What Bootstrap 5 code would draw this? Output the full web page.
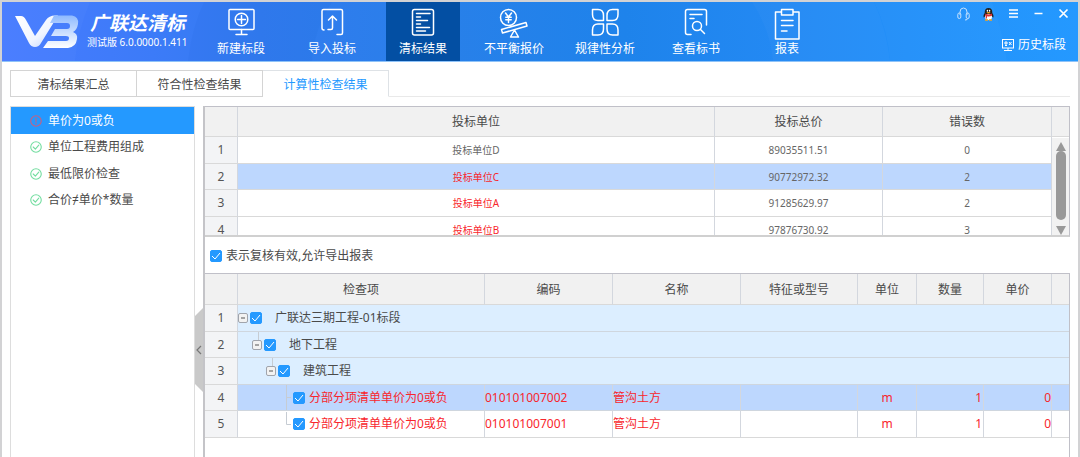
<!DOCTYPE html>
<html lang="zh-CN">
<head>
<meta charset="utf-8">
<meta name="viewport" content="width=device-width, initial-scale=1">
<title>广联达清标</title>
<link href="https://cdn.jsdelivr.net/npm/bootstrap@5.3.0/dist/css/bootstrap.min.css" rel="stylesheet">
<style>
body{font-family:"Noto Sans","Noto Sans CJK SC",sans-serif;font-size:12px;line-height:18px;color:#4a4a4a;background:#fff}
.app-window{border:2px solid #d2d2d4;border-bottom:0}
svg{display:block}
.stroke-icon{fill:none;stroke:currentColor;stroke-width:1.5;stroke-linecap:round;stroke-linejoin:round}

/* header */
.app-header{min-height:60px;color:#fff;border-bottom:1px solid #8fc3f8;position:relative;
  background:linear-gradient(90deg,#477bff 0,#3c7bf8 14%,#327bef 24%,#2880e9 42%,#1e83eb 58%,#2389f3 72%,#2391fa 86%,#2499ff 100%)}
.header-waves{position:absolute;inset:0;width:100%;height:100%}
.brand-box{width:202px;padding-left:13px}
.brand-name{font-size:19px;line-height:26px;font-weight:700;font-style:italic;padding-left:3px}
.brand-version{font-size:10px;line-height:12px}
.tool-bar{gap:17px}
.tool-btn{width:74px;padding:6px 0 0;border:0;background:none;color:#fff;font-size:12px;line-height:22px;white-space:nowrap}
.tool-btn.active{background:#034fa3}
.win-btn{width:13px;height:14px;padding:0;border:0;background:none;color:#fff}
.win-btns{gap:12px}
.header-side{padding:5px 8px 0 0}
.history-link{margin-top:15px;padding-right:4px;gap:4px}

/* tabs */
.tab-strip{margin:8px 8px 0;border-bottom:1px solid #e9e9e9;flex-wrap:nowrap}
.tab-strip .nav-link{width:127px;height:27px;margin:0 0 -1px;padding:5px 0 3px;border:1px solid #d4d4d4;border-radius:0;color:#4a4a4a;text-align:center;line-height:18px}
.tab-strip .nav-item + .nav-item .nav-link{width:126px;border-left:0}
.tab-strip .nav-link.active{color:#2499ff;border-bottom-color:#fff}

/* check list on the left */
.work-area{margin:9px 8px 0}
.check-nav{width:185px;border:1px solid #ddd;border-bottom:0}
.check-nav a{height:26px;padding-left:19px;gap:6px;color:#4a4a4a;text-decoration:none}
.check-nav a:nth-child(odd){height:27px}
.check-nav a.active{background:#2499ff;color:#fff}
.ok-icon{color:#73dda0;stroke-width:1.2}
.warn-icon{color:#c95f80;stroke-width:1.2}
.splitter{width:8px}
.splitter-handle{width:8px;height:84px;margin-top:202px;padding:0;border:0;background:#c9c9c9;color:#777;clip-path:polygon(0 8px,100% 0,100% 100%,0 76px)}

/* grids */
.result-pane{border-left:2px solid #c4c4c8;min-width:0}
.bid-box{height:131px;overflow:hidden;position:relative;border:1px solid #c0c0c8;border-left:0;border-bottom:2px solid #d0d0d0}
.item-box{border:1px solid #c0c0c8;border-left:0;border-bottom:0}
.grid-table{width:100%;table-layout:fixed;border-collapse:separate;border-spacing:0;margin:0}
.grid-table th,.grid-table td{padding:0;font-weight:400;border-right:1px solid #d3d7de;border-bottom:1px solid #d9d9d9;text-align:center;white-space:nowrap;line-height:18px;overflow:hidden}
.grid-table tr > :last-child{border-right:0}
.grid-table thead th{height:30px;background:#f1f1f1;color:#4a4a4a;padding-top:1px}
.item-table thead th{height:31px}
.grid-table tbody tr{height:27px}
.grid-table tbody tr:nth-child(even){height:26px}
.grid-table tbody th{background:#f3f4f6;color:#555}
.bid-table tbody td{font-size:10px;color:#666}
.red-text,.bid-table tbody td.red-text{color:#f8262c}
.picked-row td{background:#bdd7fe}
.group-row td{background:#dceeff}
.item-table .picked-row td,.item-table .group-row td{border-bottom-color:#cfd6de}
.col-no{width:33px}.col-wide{width:168px}.col-err{width:169px}.col-end{width:17px}
.col-code{width:128px}.col-spec{width:117px}.col-unit{width:59px}.col-qty{width:67px}.col-price{width:68px}

.scroll-track{position:absolute;top:31px;right:0;bottom:0;width:17px;background:#f2f2f2;padding:4px 0 0}
.scroll-thumb{width:10px;height:69px;border-radius:5px;background:#999}
.blue-check.form-check-input{width:12px;height:12px;margin:0;border-radius:2px;float:none;flex:none}
.blue-check.form-check-input:checked{background-color:#2499ff;border-color:#2499ff;background-size:100% 100%;
  background-image:url("data:image/svg+xml,%3csvg xmlns='http://www.w3.org/2000/svg' viewBox='0 0 10 10'%3e%3cpath fill='none' stroke='%23fff' stroke-width='1' d='M1 5l3 3 5-6'/%3e%3c/svg%3e")}
.review-row{height:36px;padding:2px 0 0 5px;gap:4px}

/* tree column */
.tree-cell{height:25px;gap:2px}
.level-1{padding-left:14px}.level-2{padding-left:28px}.level-3{padding-left:42px}
.tree-toggle{width:10px;height:10px;padding:0;border:1px solid #a0a4ac;border-radius:2px;background:#f2f2f2;color:#555;position:relative}
.level-1 .tree-toggle::before,.level-2 .tree-toggle::before{content:"";position:absolute;left:5px;bottom:9px;height:8px;border-left:1px solid #c6ccd3}
.tree-cell label{margin-left:11px}
.level-3 label{margin-left:2px}
.leaf-line{width:11px;height:25px;color:#c6ccd3}
.num-cell{padding-right:1px!important}
</style>
</head>
<body>
<div class="app-window min-vh-100 d-flex flex-column">

<header class="app-header d-flex">
  <svg class="header-waves" viewBox="0 0 1076 60" preserveAspectRatio="none" aria-hidden="true">
    <path d="M0 0H88Q76 28 73 60H0Z" fill="#fff" opacity=".025"/>
    <path d="M202 0Q190 25 186 60H310Q312 28 330 0Z" fill="#0058c8" opacity=".05"/>
    <path d="M750 0Q768 28 771 60H888Q884 26 872 0Z" fill="#fff" opacity=".025"/>
    <path d="M872 0Q886 28 888 60H1005Q1000 28 990 0Z" fill="#fff" opacity=".02"/>
  </svg>
  <div class="brand-box d-flex position-relative">
    <svg width="64" height="48" viewBox="0 0 64 48" aria-hidden="true">
      <defs>
        <linearGradient id="vFill" x1="0" y1="0" x2="1" y2="1"><stop offset="0" stop-color="#fff"/><stop offset=".6" stop-color="#f0f5ff"/><stop offset="1" stop-color="#b7cfff"/></linearGradient>
        <linearGradient id="bFill" x1="0" y1="0" x2="0" y2="1"><stop offset="0" stop-color="#8ebaff"/><stop offset="1" stop-color="#fff"/></linearGradient>
      </defs>
      <path d="M0 14H6Q9 14 11 18L20 34L31 18Q34 13.500 40 13.500H43L26 41Q24 45 20 45Q16 45 14 41Z" fill="url(#vFill)"/>
      <path d="M39 13.500H57Q64 14.500 63 22Q62 28 58 30Q63 32 62 37Q61 45 53 46H28L33 39H51Q54 39 54 36Q54 34 51 34H36L40 27H52Q55 27 55 24Q55 21 52 21H35Z" fill="url(#bFill)"/>
    </svg>
    <div class="text-nowrap pt-2 ps-2">
      <div class="brand-name">广联达清标</div>
      <div class="brand-version">测试版 6.0.0000.1.411</div>
    </div>
  </div>
  <nav class="tool-bar d-flex position-relative" aria-label="功能">
    <button type="button" class="tool-btn d-flex flex-column align-items-center">
      <svg class="stroke-icon" width="30" height="30" viewBox="0 0 30 30"><rect x="3" y="1.500" width="25" height="20" rx="1"/><circle cx="15.500" cy="11.500" r="6.300"/><path d="M15.500 7.500v8M11.500 11.500h8M15.500 21.500v5M10 26.500h11"/></svg>
      新建标段
    </button>
    <button type="button" class="tool-btn d-flex flex-column align-items-center">
      <svg class="stroke-icon" width="30" height="30" viewBox="0 0 30 30"><path d="M7 22Q5 22 5 20V3Q5 1.500 6.500 1.500H24Q25.500 1.500 25.500 3V25Q25.500 26.500 24 26.500H20"/><path d="M11 21.500H14Q15.500 21.500 15.500 20V8M11.500 12L15.500 8L19.500 12"/></svg>
      导入投标
    </button>
    <button type="button" class="tool-btn active d-flex flex-column align-items-center" aria-current="page">
      <svg class="stroke-icon" width="30" height="30" viewBox="0 0 30 30"><rect x="4.500" y="1.500" width="21" height="25.500" rx="2"/><path d="M8.500 5.500h13.500M8.500 9h4M8.500 12.500h11M8.500 16h4M8.500 19.500h13M8.500 23h9"/></svg>
      清标结果
    </button>
    <button type="button" class="tool-btn d-flex flex-column align-items-center">
      <svg class="stroke-icon" width="30" height="30" viewBox="0 0 30 30"><circle cx="9.500" cy="9.500" r="8"/><path d="M6.500 5L9.500 9L12.500 5M9.500 9V14.500M6.800 9.200H12.200M6.800 11.800H12.200"/><path d="M2.500 21.500L27 14.500L28 18L3.500 25Z"/><path d="M15.500 22L19.500 29H11.500Z"/></svg>
      不平衡报价
    </button>
    <button type="button" class="tool-btn d-flex flex-column align-items-center">
      <svg class="stroke-icon" width="30" height="30" viewBox="0 0 30 30"><path d="M2.500 1.500H8Q13.500 1.500 13.500 7.500V12.500H8Q2.500 12.500 2.500 6.500ZM28 1.500H22.500Q17 1.500 17 7.500V12.500H22.500Q28 12.500 28 6.500ZM2.500 27H8Q13.500 27 13.500 21V16H8Q2.500 16 2.500 22ZM28 27H22.500Q17 27 17 21V16H22.500Q28 16 28 22Z"/></svg>
      规律性分析
    </button>
    <button type="button" class="tool-btn d-flex flex-column align-items-center">
      <svg class="stroke-icon" width="30" height="30" viewBox="0 0 30 30"><path d="M10 26.500H6.500Q4.500 26.500 4.500 24.500V3.500Q4.500 1.500 6.500 1.500H23.500Q25.500 1.500 25.500 3.500V17M9 6.500H21M9 10.500H13"/><circle cx="16" cy="18" r="4.500"/><path d="M19.500 21.500L23.500 25.500"/></svg>
      查看标书
    </button>
    <button type="button" class="tool-btn d-flex flex-column align-items-center">
      <svg class="stroke-icon overflow-visible" width="30" height="30" viewBox="0 0 30 30"><path d="M9.500 4H3.500V31H27V4H21M9.500 1.500H21V7H9.500ZM9.500 12.500H21M9.500 17.500H21M9.500 23H15"/></svg>
      报表
    </button>
  </nav>
  <div class="header-side ms-auto position-relative d-flex flex-column align-items-end">
    <div class="d-flex win-btns">
      <button type="button" class="win-btn" aria-label="客服"><svg width="13" height="14" viewBox="0 0 13 14" fill="none" stroke="#c5e2ff" stroke-width="1"><path d="M3 8V5Q3 1 6.500 1T10 5V8"/><rect x=".8" y="6" width="3" height="5.500" rx="1.500"/><rect x="9.200" y="6" width="3" height="5.500" rx="1.500"/><path d="M11 11.500Q10.500 13 8 13"/></svg></button>
      <button type="button" class="win-btn" aria-label="在线咨询"><svg width="13" height="14" viewBox="0 0 13 14"><path d="M2.700 6Q2.500 1 6.500 1T10.300 6Q12 8 11.500 10.500L10 9.500H3L1.500 10.500Q1 8 2.700 6Z" fill="#222"/><ellipse cx="6.500" cy="10" rx="3.500" ry="3" fill="#fff"/><path d="M3 6.500Q6.500 8.500 10 6.500V8.500Q8 10 5 9.300V11.500H3.700V9Z" fill="#e02f2f"/><ellipse cx="5.400" cy="3.800" rx=".7" ry="1" fill="#fff"/><ellipse cx="7.600" cy="3.800" rx=".7" ry="1" fill="#fff"/><ellipse cx="6.500" cy="5.700" rx="2" ry=".7" fill="#f6a51c"/><path d="M3 13H6M7 13H10" stroke="#f6a51c" stroke-width="1.500"/></svg></button>
      <button type="button" class="win-btn" aria-label="菜单"><svg width="13" height="14" viewBox="0 0 13 14" stroke="#fff" stroke-width="1.500"><path d="M2 3h9M2 6.500h9M2 10h9"/></svg></button>
      <button type="button" class="win-btn" aria-label="最小化"><svg width="13" height="14" viewBox="0 0 13 14" stroke="#fff" stroke-width="1.500"><path d="M2.500 6.500h8"/></svg></button>
      <button type="button" class="win-btn" aria-label="关闭"><svg width="13" height="14" viewBox="0 0 13 14" stroke="#fff" stroke-width="1.700"><path d="M2.500 2.500L10.500 10.500M10.500 2.500L2.500 10.500"/></svg></button>
    </div>
    <a href="#" class="history-link d-flex align-items-center text-white text-decoration-none">
      <svg width="12" height="12" viewBox="0 0 12 12" fill="none" stroke="#fff" stroke-width="1"><rect x=".5" y=".5" width="11" height="8.500"/><path d="M2 11.500H10M6 9V11.500M3 6.500H5M3 3H5V5H3ZM7 3L9.500 6M9.500 3L7 6"/></svg>
      历史标段
    </a>
  </div>
</header>

<ul class="tab-strip nav nav-tabs">
  <li class="nav-item"><a class="nav-link" href="#">清标结果汇总</a></li>
  <li class="nav-item"><a class="nav-link" href="#">符合性检查结果</a></li>
  <li class="nav-item"><a class="nav-link active" aria-current="page" href="#">计算性检查结果</a></li>
</ul>

<main class="work-area d-flex flex-grow-1">
  <nav class="check-nav flex-shrink-0" aria-label="检查项目">
    <a href="#" class="active d-flex align-items-center"><svg class="stroke-icon warn-icon" width="12" height="12" viewBox="0 0 13 13"><circle cx="6.500" cy="6.500" r="5.700"/><path d="M6.500 3.500V7.500M6.500 9V9.500"/></svg>单价为0或负</a>
    <a href="#" class="d-flex align-items-center"><svg class="stroke-icon ok-icon" width="12" height="12" viewBox="0 0 13 13"><circle cx="6.500" cy="6.500" r="5.700"/><path d="M3.500 6.500L5.800 8.800L9.500 4.500"/></svg>单位工程费用组成</a>
    <a href="#" class="d-flex align-items-center"><svg class="stroke-icon ok-icon" width="12" height="12" viewBox="0 0 13 13"><circle cx="6.500" cy="6.500" r="5.700"/><path d="M3.500 6.500L5.800 8.800L9.500 4.500"/></svg>最低限价检查</a>
    <a href="#" class="d-flex align-items-center"><svg class="stroke-icon ok-icon" width="12" height="12" viewBox="0 0 13 13"><circle cx="6.500" cy="6.500" r="5.700"/><path d="M3.500 6.500L5.800 8.800L9.500 4.500"/></svg>合价≠单价*数量</a>
  </nav>
  <div class="splitter flex-shrink-0">
    <button type="button" class="splitter-handle" aria-label="收起"><svg width="8" height="12" viewBox="0 0 8 12" fill="none" stroke="currentColor" stroke-width="1.200"><path d="M6 2L2 6L6 10"/></svg></button>
  </div>
  <section class="result-pane flex-grow-1 d-flex flex-column">
    <div class="bid-box">
      <table class="grid-table bid-table">
        <colgroup><col class="col-no"><col><col class="col-wide"><col class="col-err"><col class="col-end"></colgroup>
        <thead><tr><th></th><th>投标单位</th><th>投标总价</th><th>错误数</th><th></th></tr></thead>
        <tbody>
          <tr><th>1</th><td>投标单位D</td><td>89035511.51</td><td>0</td><td></td></tr>
          <tr class="picked-row"><th>2</th><td class="red-text">投标单位C</td><td>90772972.32</td><td>2</td><td></td></tr>
          <tr><th>3</th><td class="red-text">投标单位A</td><td>91285629.97</td><td>2</td><td></td></tr>
          <tr><th>4</th><td class="red-text">投标单位B</td><td>97876730.92</td><td>3</td><td></td></tr>
        </tbody>
      </table>
      <div class="scroll-track d-flex flex-column align-items-center" aria-hidden="true">
        <svg width="10" height="9" viewBox="0 0 10 9" fill="#999"><path d="M5 0L10 9H0Z"/></svg>
        <div class="scroll-thumb"></div>
        <svg class="mt-auto" width="10" height="9" viewBox="0 0 10 9" fill="#999"><path d="M5 9L10 0H0Z"/></svg>
      </div>
    </div>
    <div class="review-row d-flex align-items-center">
      <input class="form-check-input blue-check" type="checkbox" id="review" checked>
      <label for="review">表示复核有效,允许导出报表</label>
    </div>
    <div class="item-box flex-grow-1">
      <table class="grid-table item-table">
        <colgroup><col class="col-no"><col><col class="col-code"><col class="col-code"><col class="col-spec"><col class="col-unit"><col class="col-qty"><col class="col-price"><col class="col-end"></colgroup>
        <thead><tr><th></th><th>检查项</th><th>编码</th><th>名称</th><th>特征或型号</th><th>单位</th><th>数量</th><th>单价</th><th></th></tr></thead>
        <tbody>
          <tr class="group-row"><th>1</th><td colspan="8"><div class="tree-cell d-flex align-items-center"><button type="button" class="tree-toggle d-flex" aria-label="折叠"><svg width="8" height="8" viewBox="0 0 8 8" stroke="currentColor"><path d="M2 4h4"/></svg></button><input class="form-check-input blue-check" type="checkbox" id="n1" checked><label for="n1">广联达三期工程-01标段</label></div></td></tr>
          <tr class="group-row"><th>2</th><td colspan="8"><div class="tree-cell level-1 d-flex align-items-center"><button type="button" class="tree-toggle d-flex" aria-label="折叠"><svg width="8" height="8" viewBox="0 0 8 8" stroke="currentColor"><path d="M2 4h4"/></svg></button><input class="form-check-input blue-check" type="checkbox" id="n2" checked><label for="n2">地下工程</label></div></td></tr>
          <tr class="group-row"><th>3</th><td colspan="8"><div class="tree-cell level-2 d-flex align-items-center"><button type="button" class="tree-toggle d-flex" aria-label="折叠"><svg width="8" height="8" viewBox="0 0 8 8" stroke="currentColor"><path d="M2 4h4"/></svg></button><input class="form-check-input blue-check" type="checkbox" id="n3" checked><label for="n3">建筑工程</label></div></td></tr>
          <tr class="picked-row red-text"><th>4</th><td><div class="tree-cell level-3 d-flex align-items-center"><svg class="leaf-line" viewBox="0 0 11 25" fill="none" stroke="currentColor"><path d="M6.500 0V25M6.500 12.500H11"/></svg><input class="form-check-input blue-check" type="checkbox" id="n4" checked><label for="n4">分部分项清单单价为0或负</label></div></td><td class="text-start">010101007002</td><td class="text-start">管沟土方</td><td></td><td>m</td><td class="text-end num-cell">1</td><td class="text-end">0</td><td></td></tr>
          <tr class="red-text"><th>5</th><td><div class="tree-cell level-3 d-flex align-items-center"><svg class="leaf-line" viewBox="0 0 11 25" fill="none" stroke="currentColor"><path d="M6.500 0V12.500H11"/></svg><input class="form-check-input blue-check" type="checkbox" id="n5" checked><label for="n5">分部分项清单单价为0或负</label></div></td><td class="text-start">010101007001</td><td class="text-start">管沟土方</td><td></td><td>m</td><td class="text-end num-cell">1</td><td class="text-end">0</td><td></td></tr>
        </tbody>
      </table>
    </div>
  </section>
</main>
</div>
<script src="https://cdn.jsdelivr.net/npm/bootstrap@5.3.0/dist/js/bootstrap.bundle.min.js"></script>
</body>
</html>
